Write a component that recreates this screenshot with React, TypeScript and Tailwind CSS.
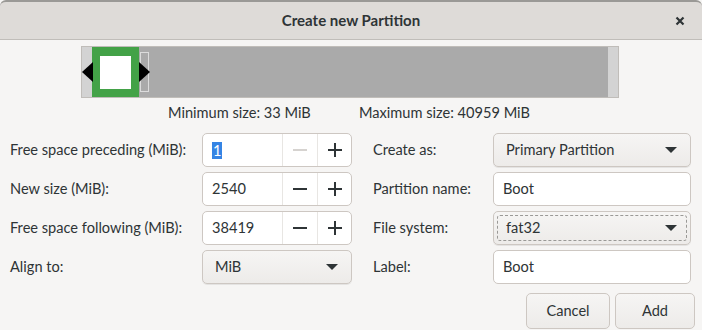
import React from "react";

const font = { fontFamily: "Lato, 'Noto Sans', sans-serif" };

function Minus({ dim }: { dim?: boolean }) {
  return (
    <svg width="16" height="16" viewBox="0 0 16 16">
      <rect x="1" y="7" width="14" height="2" fill={dim ? "#d6d3d0" : "#2e3436"} />
    </svg>
  );
}
function Plus() {
  return (
    <svg width="16" height="16" viewBox="0 0 16 16">
      <rect x="1" y="7" width="14" height="2" fill="#2e3436" />
      <rect x="7" y="1" width="2" height="14" fill="#2e3436" />
    </svg>
  );
}
function Caret() {
  return (
    <svg width="12" height="8" viewBox="0 0 12 8">
      <polygon points="0,1 12,1 6,7" fill="#2e3436" />
    </svg>
  );
}

function Spin({ value, selected, dimMinus }: { value: string; selected?: boolean; dimMinus?: boolean }) {
  return (
    <div className="flex h-[34px] w-[150px] rounded-[5px] border border-[#cdc7c2] bg-white overflow-hidden">
      <div className="flex flex-1 items-center pl-[9px] text-[14.6px] text-[#2e3436]">
        {selected ? <span className="bg-[#3584e4] text-white px-[1px] leading-[17px]">{value}</span> : value}
      </div>
      <div className="flex w-[35px] items-center justify-center border-l border-[#e8e6e3]">
        <Minus dim={dimMinus} />
      </div>
      <div className="flex w-[34px] items-center justify-center border-l border-[#e8e6e3]">
        <Plus />
      </div>
    </div>
  );
}

function Dropdown({ value, w, focus }: { value: string; w: string; focus?: boolean }) {
  return (
    <div className={`relative flex h-[34px] ${w} items-center justify-between rounded-[5px] border border-[#cdc7c2] bg-gradient-to-b from-[#f6f5f4] to-[#edebe9] pl-[12px] pr-[13px] text-[14.6px] text-[#2e3436] shadow-[0_1px_0_rgba(0,0,0,0.07)]`}>
      {focus && <div className="absolute inset-[3px] rounded-[3px] border border-dashed border-[#9a9996]" />}
      <span>{value}</span>
      <Caret />
    </div>
  );
}

function Entry({ value }: { value: string }) {
  return (
    <div className="flex h-[34px] w-[198px] items-center rounded-[5px] border border-[#cdc7c2] bg-white pl-[9px] text-[14.6px] text-[#2e3436]">
      {value}
    </div>
  );
}

function Label({ children }: { children: React.ReactNode }) {
  return <div className="flex h-[34px] items-center text-[14.6px] text-[#2e3436]">{children}</div>;
}

export default function App() {
  return (
    <div style={font} className="w-[702px] h-[330px] overflow-hidden bg-[#f6f5f4] flex flex-col">
      <div className="h-[40px] flex items-center justify-between bg-[#dedbd8] border-t-[2px] border-t-[#9a9996] border-b border-b-[#c0bdb9] rounded-t-[6px] relative">
        <div className="w-[40px]" />
        <div className="text-[15px] font-bold text-[#2e3436]">Create new Partition</div>
        <div className="w-[40px] flex items-center justify-center pr-[4px]">
          <svg width="10" height="10" viewBox="0 0 10 10">
            <path d="M1.5 1.5 L8.5 8.5 M8.5 1.5 L1.5 8.5" stroke="#2e3436" strokeWidth="2.2" />
          </svg>
        </div>
      </div>

      <div className="pt-[6px] pl-[81px]">
        <div className="relative flex h-[52px] w-[538px] border border-[#c0bdb9] bg-[#d3d3d3]">
          <div className="w-[10px]" />
          <div className="w-[47px] h-full bg-[#43a247] flex items-center justify-center">
            <div className="w-[31px] h-[33px] bg-white" />
          </div>
          <div className="flex-1 bg-[#aaaaaa] relative">
            <div className="absolute left-[1px] top-[5px] w-[9px] h-[40px] border border-[#dcdcdc]" />
          </div>
          <div className="w-[10px]" />
          <svg className="absolute left-0 top-[15px]" width="11" height="20" viewBox="0 0 11 20">
            <polygon points="11,0 11,20 0,10" fill="#000" />
          </svg>
          <svg className="absolute left-[57px] top-[15px]" width="11" height="20" viewBox="0 0 11 20">
            <polygon points="0,0 0,20 11,10" fill="#000" />
          </svg>
        </div>
      </div>

      <div className="flex h-[30px] items-center text-[14.6px] text-[#2e3436]">
        <div className="pl-[168px] w-[359px]">Minimum size: 33 MiB</div>
        <div>Maximum size: 40959 MiB</div>
      </div>

      <div className="pl-[10px] pt-[5px] grid grid-cols-[192px_150px_21px_120px_198px] gap-y-[5px]">
        <Label>Free space preceding (MiB):</Label>
        <Spin value="1" selected dimMinus />
        <div />
        <Label>Create as:</Label>
        <Dropdown value="Primary Partition" w="w-[198px]" />

        <Label>New size (MiB):</Label>
        <Spin value="2540" />
        <div />
        <Label>Partition name:</Label>
        <Entry value="Boot" />

        <Label>Free space following (MiB):</Label>
        <Spin value="38419" />
        <div />
        <Label>File system:</Label>
        <Dropdown value="fat32" w="w-[198px]" focus />

        <Label>Align to:</Label>
        <Dropdown value="MiB" w="w-[150px]" />
        <div />
        <Label>Label:</Label>
        <Entry value="Boot" />
      </div>

      <div className="flex justify-end gap-[5px] pr-[7px] pt-[9px]">
        <div className="flex h-[36px] w-[84px] items-center justify-center rounded-[5px] border border-[#cdc7c2] bg-gradient-to-b from-[#f6f5f4] to-[#edebe9] text-[14.6px] text-[#2e3436]">Cancel</div>
        <div className="flex h-[36px] w-[80px] items-center justify-center rounded-[5px] border border-[#cdc7c2] bg-gradient-to-b from-[#f6f5f4] to-[#edebe9] text-[14.6px] text-[#2e3436]">Add</div>
      </div>
    </div>
  );
}
